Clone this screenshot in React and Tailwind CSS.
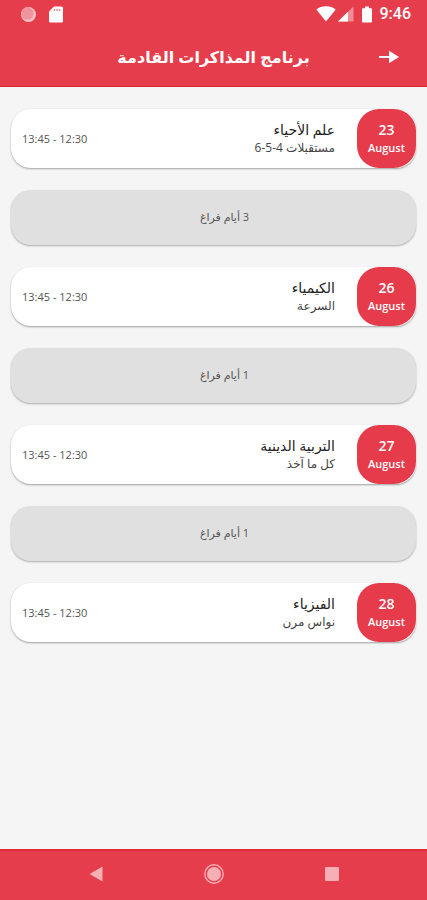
import React from "react";

const schedule = [
  { type: "exam", day: 23, month: "August", subject: "علم الأحياء", topic: "مستقبلات 4-5-6", time: "13:45 - 12:30" },
  { type: "break", days: 3 },
  { type: "exam", day: 26, month: "August", subject: "الكيمياء", topic: "السرعة", time: "13:45 - 12:30" },
  { type: "break", days: 1 },
  { type: "exam", day: 27, month: "August", subject: "التربية الدينية", topic: "كل ما آخذ", time: "13:45 - 12:30" },
  { type: "break", days: 1 },
  { type: "exam", day: 28, month: "August", subject: "الفيزياء", topic: "نواس مرن", time: "13:45 - 12:30" },
];

const StatusBar = () => (
  <div dir="ltr" className="flex h-7 items-center justify-between pl-5 pr-4">
    <div className="flex items-center gap-3">
      <svg width="17" height="17" viewBox="0 0 17 17">
        <circle cx="8.5" cy="8.5" r="7.5" fill="#f9c3c8" />
        <circle cx="7.5" cy="7.5" r="6.3" fill="#f2949d" />
      </svg>
      <svg width="14" height="17" viewBox="0 0 14 17">
        <path d="M5 0.5H12.5Q14 0.5 14 2V15Q14 16.5 12.5 16.5H1.5Q0 16.5 0 15V5.5Z" fill="#fff" />
        <path d="M5.5 3v2M8 3v2M10.5 3v2" stroke="#ee8790" strokeWidth="1.5" />
      </svg>
    </div>
    <div className="flex items-center">
      <svg width="20" height="16" viewBox="0 0 20 16">
        <path d="M10 15.5L0.3 3.6C3 1.4 6.3 0.3 10 0.3s7 1.1 9.7 3.3Z" fill="#fff" />
      </svg>
      <svg className="ml-0.5" width="16" height="16" viewBox="0 0 16 16">
        <path d="M0 15.5L15.5 0.5V15.5Z" fill="#f28d95" />
        <path d="M0 15.5L10 5.8V15.5Z" fill="#fff" />
      </svg>
      <svg className="ml-2" width="10" height="17" viewBox="0 0 10 17">
        <path d="M3 0.5h4v1.7h2q1 0 1 1V15.5q0 1-1 1H1q-1 0-1-1V3.2q0-1 1-1h2Z" fill="#fff" />
      </svg>
      <span className="ml-2 font-[Roboto,sans-serif] text-base font-medium leading-5 text-white">9:46</span>
    </div>
  </div>
);

const ExamCard = ({ exam }) => (
  <li className="flex h-[59px] rounded-[20px] bg-white shadow-[0_1px_2px_rgba(0,0,0,0.35)]">
    <div className="flex w-[59px] flex-col items-center justify-center rounded-[22px] bg-[#e63b4b] text-white">
      <span className="text-sm font-semibold leading-[18px]">{exam.day}</span>
      <span className="text-[11px] font-semibold leading-[18px]">{exam.month}</span>
    </div>
    <div className="flex flex-1 items-center justify-between pl-[11px] pr-[22px]">
      <div>
        <h2 className="text-sm font-medium leading-[18px] text-[#222]">{exam.subject}</h2>
        <p className="text-xs leading-[18px] text-[#444]">{exam.topic}</p>
      </div>
      <span dir="ltr" className="text-[11px] leading-[18px] text-[#555]">{exam.time}</span>
    </div>
  </li>
);

const BreakCard = ({ days }) => (
  <li className="flex h-[55px] items-center justify-center rounded-[20px] bg-[#e0e0e0] pl-[22px] text-[11px] text-[#555] shadow-[0_1px_2px_rgba(0,0,0,0.3)]">
    {days} أيام فراغ
  </li>
);

const App = () => {
  return (
    <div
      dir="rtl"
      className="flex min-h-screen flex-col bg-[#f5f5f5] font-['Open_Sans','DejaVu_Sans',sans-serif]"
    >
      <header className="border-b border-[#dc2438] bg-[#e63d4c]">
        <StatusBar />
        <div className="grid h-[58px] grid-cols-[36px_1fr_36px] items-center px-5">
          <button type="button" aria-label="رجوع" className="flex justify-center">
            <svg width="20" height="14" viewBox="0 0 20 14">
              <path d="M0 7H11" stroke="#fff" strokeWidth="2" />
              <path d="M10 0.7L20 7L10 13.3Z" fill="#fff" />
            </svg>
          </button>
          <h1 className="text-center text-base font-semibold text-white">
            برنامج المذاكرات القادمة
          </h1>
        </div>
      </header>

      <main className="flex-1 px-[11px] py-[22px]">
        <ul className="flex flex-col gap-[22px]">
          {schedule.map((item, i) =>
            item.type === "exam" ? (
              <ExamCard key={i} exam={item} />
            ) : (
              <BreakCard key={i} days={item.days} />
            )
          )}
        </ul>
      </main>

      <nav dir="ltr" className="flex h-[51px] items-center justify-around border-t-2 border-[#e02a3c] bg-[#e63d4c] px-[38px] pb-[3px]">
        <button type="button" aria-label="Back">
          <svg width="14" height="16" viewBox="0 0 14 16">
            <path d="M0.5 8L13.5 0.5V15.5Z" fill="#f7afb6" />
          </svg>
        </button>
        <button type="button" aria-label="Home">
          <svg width="20" height="20" viewBox="0 0 20 20">
            <circle cx="10" cy="10" r="9.2" fill="none" stroke="#f7afb6" strokeWidth="1.4" />
            <circle cx="10" cy="10" r="7" fill="#f7afb6" />
          </svg>
        </button>
        <button type="button" aria-label="Recent apps">
          <svg width="14" height="14" viewBox="0 0 14 14">
            <rect width="14" height="14" rx="1" fill="#f7afb6" />
          </svg>
        </button>
      </nav>
    </div>
  );
};

export default App;
